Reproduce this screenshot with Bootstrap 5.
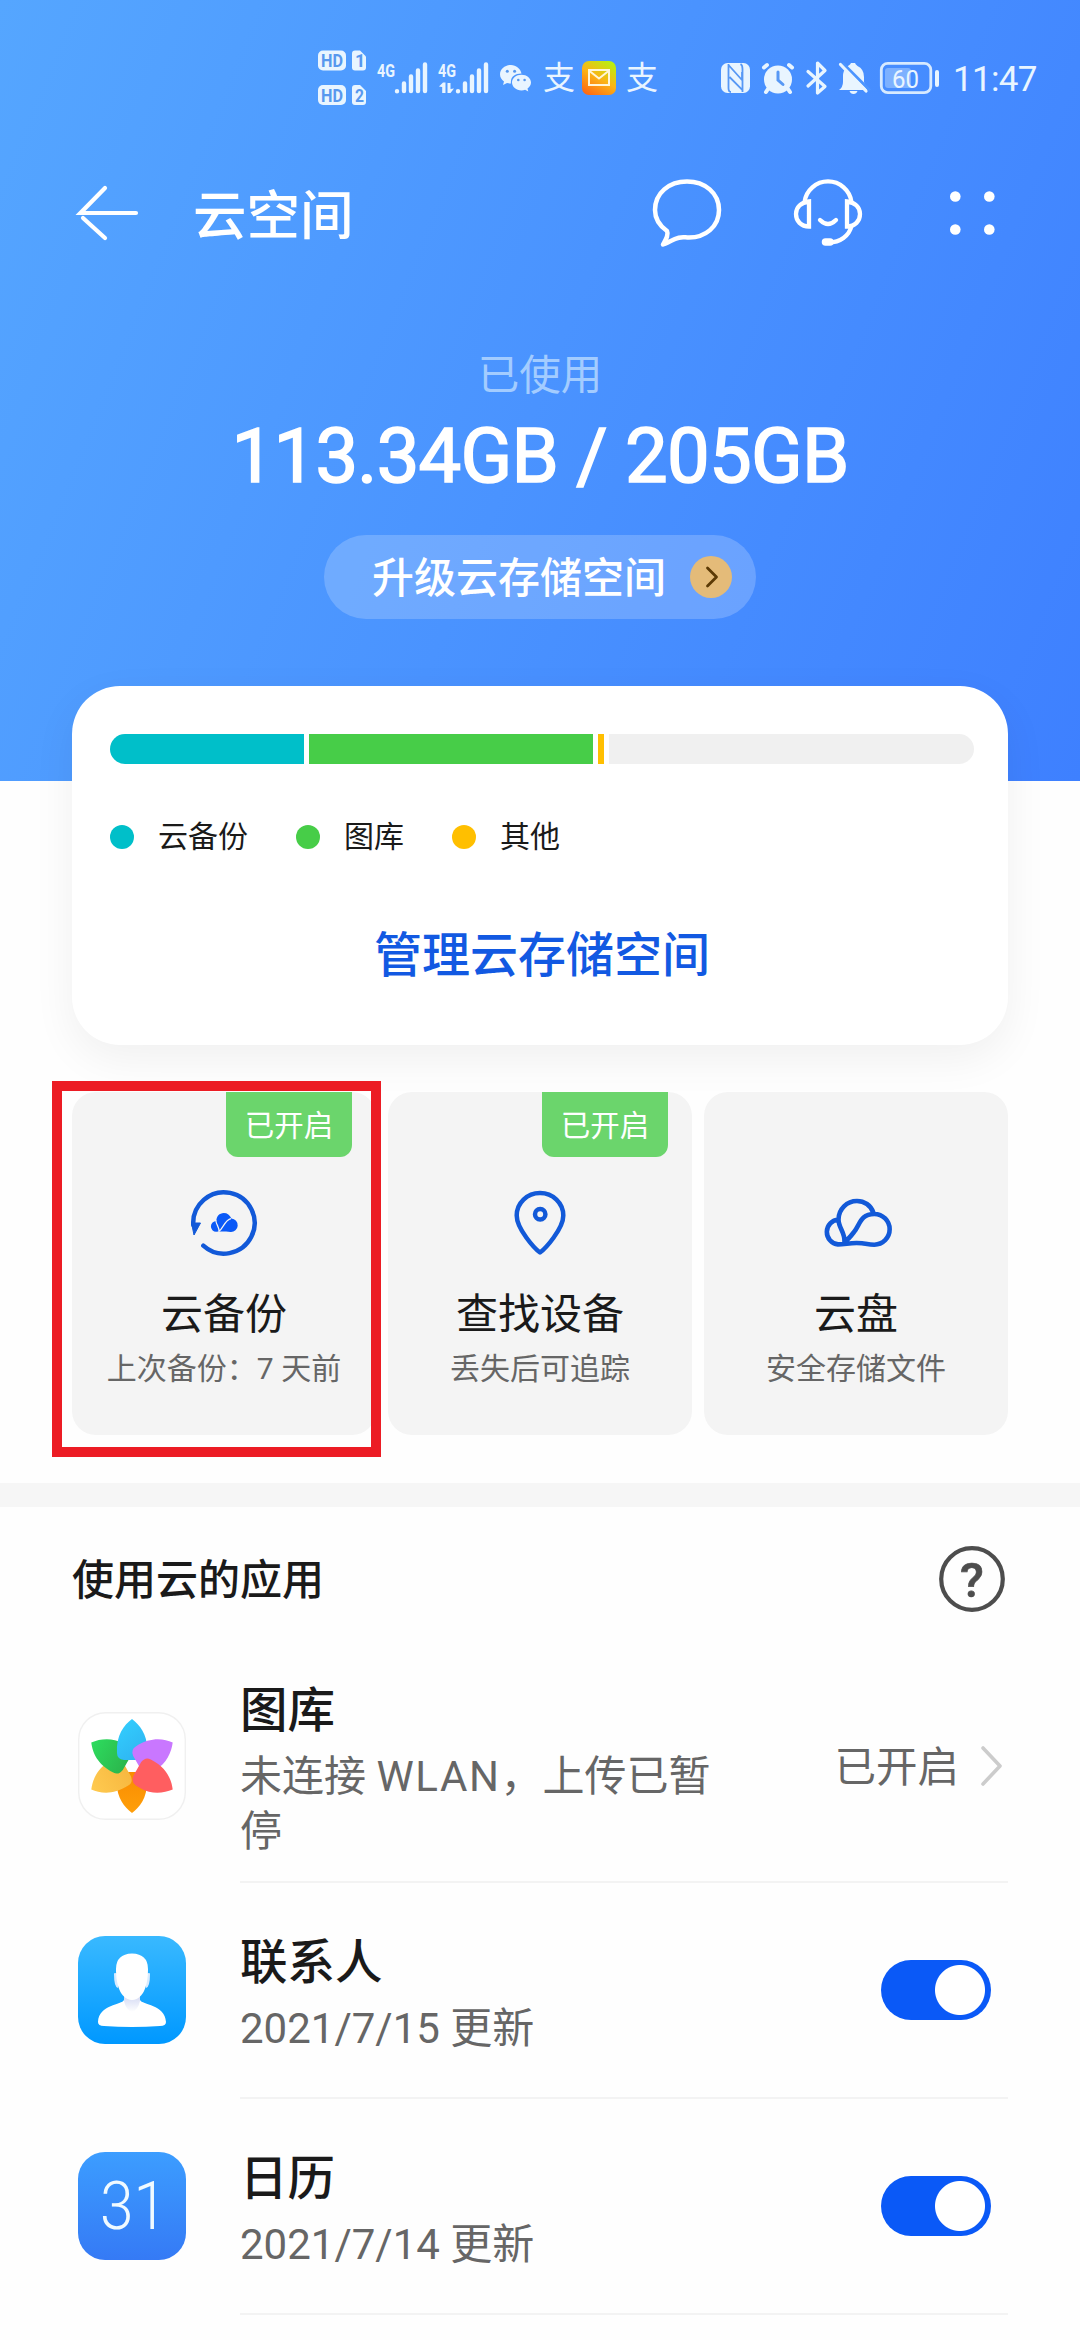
<!DOCTYPE html>
<html lang="zh-CN">
<head>
<meta charset="utf-8">
<meta name="viewport" content="width=device-width, initial-scale=1">
<title>云空间</title>
<link href="https://cdn.jsdelivr.net/npm/bootstrap@5.3.0/dist/css/bootstrap.min.css" rel="stylesheet">
<style>
  body { font-family: Roboto, "Noto Sans CJK SC", sans-serif; color: #1a1a1a; background: #fefefe; width: 1080px; height: 2340px; overflow: hidden; }
  svg { display: block; flex: none; overflow: visible; }
  .hero { height: 781px; background: linear-gradient(112deg, #55a6ff 0%, #4a93ff 50%, #3e80ff 100%); }
  .status { height: 156px; padding-left: 318px; color: #e9f5ff; }
  .gap-s { margin-left: 12px; }
  .gap-status { margin-left: 62px; }
  .clock { font-size: 35px; line-height: 40px; margin-left: 14px; padding-top: 3px; letter-spacing: -.7px; }
  .alipay { font-size: 32px; line-height: 36px; width: 33px; }
  .topnav { height: 114px; padding: 0 85px 0 77px; }
  .page-title { font-size: 53.5px; line-height: 60px; margin-left: 52px; padding-top: 7px; font-weight: 500; }
  .used-label { margin-top: 76px; font-size: 41.5px; line-height: 60px; color: #a3ccff; }
  .used-value { margin-top: 5px; font-size: 76px; line-height: 90px; -webkit-text-stroke: 1.6px #fff; letter-spacing: -.75px; }
  .upgrade { margin-top: 34px; width: 432px; height: 84px; padding: 0 24px 0 48px; background: rgba(255,255,255,.2); font-size: 42px; line-height: 84px; font-weight: 500; }
  .upgrade span { padding-top: 4px; }
  .storage { margin: -95px 72px 0; height: 359px; border-radius: 48px; padding: 48px 34px 0 38px; background: #fff; box-shadow: 0 14px 44px rgba(0,0,0,.06); }
  .meter { height: 30px; gap: 5px; border-radius: 15px; }
  .legend { margin-top: 55px; gap: 48px; font-size: 30px; line-height: 36px; }
  .legend-dot { width: 24px; height: 24px; border-radius: 50%; margin-right: 24px; }
  .manage { margin-top: 69px; font-size: 48px; line-height: 64px; font-weight: 500; color: #1259e2; }
  .teal { background: #00bfc9; } .green { background: #47cd48; } .amber { background: #ffbf00; }
  .tiles { margin: 47px 72px 0; gap: 12px; }
  .tile { width: 304px; height: 343px; border-radius: 24px; background: #f4f4f4; padding-top: 93px; position: relative; }
  .tile-name { margin-top: 24px; font-size: 42px; line-height: 60px; }
  .tile-note { font-size: 30px; line-height: 44px; color: #666; margin-top: 2px; white-space: nowrap; }
  .on-flag { position: absolute; top: 0; right: 24px; width: 126px; height: 65px; border-radius: 0 0 12px 12px; background: #6bd56c; color: #fff; font-size: 29.5px; line-height: 68px; text-align: center; }
  .marker { position: absolute; left: -20px; top: -11px; width: 329px; height: 376px; border: 10px solid #ec1c24; z-index: 2; }
  .band { margin-top: 48px; height: 24px; background: #f6f6f6; }
  .section-head { height: 144px; padding: 0 75px 0 72px; font-size: 42px; font-weight: 500; }
  .section-head span { padding-top: 3px; }
  .app-row { height: 216px; padding-left: 78px; }
  .app-row.tall { height: 232px; }
  .app-body { margin-left: 54px; width: 768px; border-bottom: 2px solid #f3f3f3; }
  .app-name { font-size: 47.5px; line-height: 58px; font-weight: 500; }
  .app-sub { font-size: 42px; line-height: 55px; color: #666; margin-top: 9px; }
  .app-sub .net { letter-spacing: 1.6px; }
  .app-text { width: 485px; padding-top: 9px; }
  .state { font-size: 41.5px; color: #666; gap: 22px; padding-right: 6px; }
  .state span { padding-top: 5px; }
  .form-check-input.toggle { width: 110px; height: 60px; margin: 0 17px 0 0; border: 0; border-radius: 30px; background: #0a59f7; float: none; flex: none; background-image: radial-gradient(circle at 79px 30px, #fff 24.5px, transparent 25.5px) !important; background-position: 0 0 !important; background-size: 110px 60px; }
</style>
</head>
<body>
<header class="hero text-white">
  <div class="status d-flex align-items-center">
    <svg width="48" height="56" viewBox="0 0 48 56" fill="#e9f5ff" font-family="Roboto, sans-serif" font-weight="700">
      <g><rect y=".5" width="28" height="20" rx="5"/><path d="M34 3.500q0-3 3-3h5l6 6v11q0 3-3 3h-8q-3 0-3-3z"/></g>
      <g transform="translate(0 35)"><rect width="28" height="20" rx="5"/><path d="M34 3q0-3 3-3h5l6 6v11q0 3-3 3h-8q-3 0-3-3z"/></g>
      <g fill="#5798ee" font-size="18"><text x="3" y="17" textLength="22" lengthAdjust="spacingAndGlyphs">HD</text><text x="37" y="17" textLength="8">1</text><text x="3" y="51.500" textLength="22" lengthAdjust="spacingAndGlyphs">HD</text><text x="37" y="51.500" textLength="9" lengthAdjust="spacingAndGlyphs">2</text></g>
    </svg>
    <svg class="gap-s" width="49" height="32" viewBox="0 0 49 32" fill="#e9f5ff">
      <text x="-1" y="14.500" font-size="19" font-weight="700" font-family="Roboto, sans-serif" textLength="18" lengthAdjust="spacingAndGlyphs">4G</text>
      <path d="M19 29.100v.1M26 21.500v7.600M33 14.500v14.600M40 8.500v20.600M47 2.500v26.600" stroke="#e9f5ff" stroke-width="4.400" stroke-linecap="round"/>
    </svg>
    <svg class="gap-s" width="49" height="32" viewBox="0 0 49 32" fill="#e9f5ff">
      <text x="-1" y="14.500" font-size="19" font-weight="700" font-family="Roboto, sans-serif" textLength="18" lengthAdjust="spacingAndGlyphs">4G</text>
      <path d="M0 24.500L4 20.500H6.500V31H3.200V25zM8.500 21H11.500V27L15 26.500L11.500 31H8.500z"/>
      <path d="M19 29.100v.1M26 21.500v7.600M33 14.500v14.600M40 8.500v20.600M47 2.500v26.600" stroke="#e9f5ff" stroke-width="4.400" stroke-linecap="round"/>
    </svg>
    <svg class="gap-s" width="31" height="27" viewBox="0 0 31 27" fill="#e9f5ff">
      <path d="M11 0C5 0 0 4 0 9.300c0 3 1.500 5.400 4 7.200L3 20l4-2c1.500.4 3 .6 4 .5C10 12 15 8.500 21.500 8.600 20.500 3.500 16 0 11 0z"/>
      <path d="M21.500 9.800c-5.400 0-9.500 3.400-9.500 7.800s4.200 7.800 9.500 7.800c1.300 0 2.600-.2 3.600-.6l3.200 1.800-.8-3c2.200-1.500 3.500-3.600 3.500-6 0-4.400-4.300-7.800-9.500-7.800z"/>
      <g fill="#5798ee"><circle cx="7.300" cy="6.300" r="1.500"/><circle cx="14.600" cy="6.300" r="1.500"/><circle cx="18.300" cy="15" r="1.300"/><circle cx="24.600" cy="15" r="1.300"/></g>
    </svg>
    <span class="alipay gap-s">支</span>
    <svg style="margin-left:6px" width="34" height="34" viewBox="0 0 34 34">
      <defs><linearGradient id="ml" x1=".2" y1="1" x2=".8" y2="0"><stop offset="0" stop-color="#ff6a13"/><stop offset=".5" stop-color="#fbb416"/><stop offset="1" stop-color="#b8f010"/></linearGradient></defs>
      <rect width="34" height="34" rx="7" fill="url(#ml)"/><g fill="none" stroke="#fff6d8" stroke-width="2"><rect x="7" y="9" width="20" height="15"/><path d="M7.500 10L17 17.500 26.500 10"/></g>
    </svg>
    <span class="alipay" style="margin-left:10px">支</span>
    <svg class="gap-status" width="29" height="30" viewBox="0 0 29 30"><rect width="29" height="30" rx="6.500" fill="#e9f5ff"/><path d="M7.500 1V25Q7.500 29 10 29M7.500 2L21 17V9M21.500 29V27L8.500 14M19.500 1Q21.500 2 21.500 6V28" fill="none" stroke="#5798f5" stroke-width="1.800"/></svg>
    <svg class="gap-s" width="32" height="31" viewBox="0 0 32 31" stroke="#e9f5ff" stroke-width="4" stroke-linecap="round"><circle cx="16" cy="16.500" r="14" fill="#e9f5ff" stroke="none"/><path d="M2 4.500L5 2M30 4.500L27 2M6 26L4 29M26 26L28 29" fill="none"/><path d="M16 9V17L21 21.500" fill="none" stroke="#5798f5" stroke-width="3"/></svg>
    <svg class="gap-s" width="21" height="34" viewBox="0 0 21 34" fill="none" stroke="#e9f5ff" stroke-width="3.200" stroke-linecap="round" stroke-linejoin="round"><path d="M2 10.500L19 25.500 11.500 32V2L19 9.500 2 25"/></svg>
    <svg class="gap-s" width="29" height="31" viewBox="0 0 29 31"><path d="M9 3q2.500-1.500 3-3h4q.5 1.500 2.500 3Q25 6 25 14V19L27 24.500 28 27H0q4-3 4-8V13q0-5 3-8zM10.500 28h8q-1 3-4 3t-4-3z" fill="#e9f5ff"/><path d="M3.500 0L31 27.500" stroke="#4c95ff" stroke-width="3"/><path d="M1.500 1.500L27 28" stroke="#e9f5ff" stroke-width="3.200" stroke-linecap="round"/></svg>
    <svg class="gap-s" width="59" height="32" viewBox="0 0 59 32"><rect x="5" y="6" width="26" height="20" rx="3" fill="#7db1ff"/><rect x="1.300" y="1.300" width="49.500" height="29.400" rx="6.500" fill="none" stroke="#d7eaff" stroke-width="2.800"/><rect x="55" y="8" width="4" height="17" rx="2" fill="#e9f5ff"/><text x="12" y="25.500" font-size="26.500" textLength="27" lengthAdjust="spacingAndGlyphs" fill="#e9f5ff" font-family="Roboto, sans-serif">60</text></svg>
    <span class="clock">11:47</span>
  </div>

  <nav class="topnav d-flex align-items-center">
    <svg width="64" height="58" viewBox="0 0 64 58" fill="none" stroke="#fff" stroke-width="4.200" stroke-linecap="round"><path d="M59 29H3.500L28 4M6 34L28 54"/></svg>
    <span class="page-title">云空间</span>
    <div class="d-flex align-items-center ms-auto">
      <svg width="68" height="68" viewBox="0 0 68 68" fill="none" stroke="#fff" stroke-width="4.500" stroke-linejoin="round"><path d="M34 2.500C52 2.500 66 14 66 31S52 58.500 36 58.500C31 58.500 28 57 22 60 18 62 14 64 10 65.500 12.500 61 16 56 14 52 7 47 2 41 2 31 2 14 16 2.500 34 2.500Z"/></svg>
      <svg style="margin-left:73px" width="68" height="66" viewBox="0 0 68 66" fill="none" stroke="#fff" stroke-width="4.300"><path d="M10.500 22A23.700 23.700 0 0 1 57.500 22M15 21.500V46.500C7 46.500 2 41 2 34S7 22.500 15 21.500ZM53 21.500V46.500C61 46.500 66 41 66 34S61 22.500 53 21.500ZM57.500 46C55 56 46 62.500 35 62.500"/><path d="M26 40Q34 48 42 40" stroke-linecap="round"/><path d="M31.500 62H36" stroke-width="7.500" stroke-linecap="round"/></svg>
      <svg style="margin-left:88px" width="45" height="44" viewBox="0 0 45 44" fill="#fff"><circle cx="5.300" cy="5.500" r="5.300"/><circle cx="39.300" cy="5.500" r="5.300"/><circle cx="5.300" cy="38.500" r="5.300"/><circle cx="39.300" cy="38.500" r="5.300"/></svg>
    </div>
  </nav>

  <div class="d-flex flex-column align-items-center">
    <div class="used-label">已使用</div>
    <div class="used-value">113.34GB / 205GB</div>
    <div class="upgrade rounded-pill d-flex align-items-center justify-content-between">
      <span>升级云存储空间</span>
      <svg width="42" height="42" viewBox="0 0 42 42"><circle cx="21" cy="21" r="21" fill="#e4bb79"/><path d="M17.500 12L26.500 21 17.500 30" fill="none" stroke="#5c3a05" stroke-width="2.800" stroke-linecap="round" stroke-linejoin="round"/></svg>
    </div>
  </div>
</header>

<main>
  <section class="storage position-relative">
    <div class="meter d-flex overflow-hidden">
      <div class="teal" style="width:194px"></div><div class="green" style="width:284px"></div><div class="amber" style="width:6px"></div><div class="flex-fill" style="background:#f0f0f0"></div>
    </div>
    <div class="legend d-flex">
      <div class="d-flex align-items-center"><span class="legend-dot teal"></span>云备份</div>
      <div class="d-flex align-items-center"><span class="legend-dot green"></span>图库</div>
      <div class="d-flex align-items-center"><span class="legend-dot amber"></span>其他</div>
    </div>
    <div class="manage text-center">管理云存储空间</div>
  </section>

  <section class="tiles d-flex">
    <div class="tile d-flex flex-column align-items-center">
      <span class="on-flag">已开启</span>
      <svg width="76" height="76" viewBox="-38 -38 76 76"><path d="M-20.700 22.700A30.700 30.700 0 1 0 -30.700 2" fill="none" stroke="#1259d8" stroke-width="4.500" stroke-linecap="round"/><path d="M-32.500 0H-23.500L-30 12Z" fill="#1259d8" stroke="#1259d8" stroke-linejoin="round"/>
        <g transform="translate(-15.800 -15.200) scale(.4)"><path d="M20.500 33A13.500 13.500 0 0 0 20 60C28 59 40 58.500 56 60.500A16.500 16.500 0 0 0 58 27C54 18 48 13 39 13 28 13 20 22 20.500 33Z" fill="#0a59f7"/><path d="M19 31C20 43 28 48 27 59C38 50 42 30 57 27" fill="none" stroke="#f4f4f4" stroke-width="3"/></g></svg>
      <div class="tile-name">云备份</div>
      <div class="tile-note">上次备份：7 天前</div>
      <div class="marker"></div>
    </div>
    <div class="tile d-flex flex-column align-items-center">
      <span class="on-flag">已开启</span>
      <svg width="76" height="76" viewBox="0 0 76 76" fill="none" stroke="#1259d8" stroke-width="4.500" stroke-linejoin="round"><path d="M38 67.500C33 64 14.700 44 14.700 30.500a23.300 22.500 0 0 1 46.600 0C61.300 44 43 64 38 67.500Z"/><circle cx="38.200" cy="29.300" r="5.200"/></svg>
      <div class="tile-name">查找设备</div>
      <div class="tile-note">丢失后可追踪</div>
    </div>
    <div class="tile d-flex flex-column align-items-center">
      <svg width="76" height="76" viewBox="0 0 76 76" fill="none" stroke="#1259d8" stroke-width="4.600" stroke-linejoin="round"><path d="M20.500 34.500A12.500 12.500 0 0 0 20 59.400C28 59.400 34 57 44 58.300 49 59 52 59.700 56.300 59.700A15.350 15.350 0 0 0 56.300 29C42 29 42 40 36 47 33 51 30 54.500 26.500 57 27 47 20.500 43 20.500 34.500 20.500 24 29 16 39 16 46 16 53 20 55.500 28"/></svg>
      <div class="tile-name">云盘</div>
      <div class="tile-note">安全存储文件</div>
    </div>
  </section>

  <div class="band"></div>

  <section>
    <div class="section-head d-flex align-items-center justify-content-between">
      <span>使用云的应用</span>
      <svg width="66" height="66" viewBox="0 0 66 66"><circle cx="33" cy="33" r="30.800" fill="none" stroke="#4d4d4d" stroke-width="4.200"/><text x="33" y="50.500" text-anchor="middle" font-size="49" font-family="Roboto, sans-serif" fill="#4d4d4d" stroke="#4d4d4d" stroke-width=".6">?</text></svg>
    </div>

    <div class="app-row tall d-flex align-items-stretch">
      <svg class="align-self-center" style="margin-top:-2px" width="108" height="108" viewBox="0 0 108 108">
        <defs>
          <path id="petal" d="M0-47C8-41 15-31 15-19L15-13Q14-6 6-6L-8-6Q-15-7-15-13C-16-31-8-41 0-47Z"/>
          <linearGradient id="p1" x1="0" y1="0" x2=".6" y2="1"><stop offset="0" stop-color="#33d0ff"/><stop offset="1" stop-color="#2fb6f2"/></linearGradient>
          <linearGradient id="p2" x1="0" y1="0" x2="0" y2="1"><stop offset="0" stop-color="#2ddc5e"/><stop offset="1" stop-color="#2cb74d"/></linearGradient>
          <linearGradient id="p3" x1="0" y1="0" x2="0" y2="1"><stop offset="0" stop-color="#ff9f0a"/><stop offset="1" stop-color="#f98c00"/></linearGradient>
          <linearGradient id="p4" x1="0" y1="0" x2="0" y2="1"><stop offset="0" stop-color="#ffca50"/><stop offset="1" stop-color="#f7b840"/></linearGradient>
        </defs>
        <rect x=".7" y=".7" width="106.600" height="106.600" rx="27" fill="#fff" stroke="#f0f0f0" stroke-width="1.400"/>
        <g transform="translate(54 54)"><use href="#petal" fill="url(#p3)" transform="rotate(180)"/><use href="#petal" fill="url(#p4)" transform="rotate(240)"/><use href="#petal" fill="url(#p2)" transform="rotate(300)"/><use href="#petal" fill="url(#p1)"/><use href="#petal" fill="#c977ff" transform="rotate(60)"/><use href="#petal" fill="#ff5e60" transform="rotate(120)"/><circle r="5.500" fill="#fff"/></g>
      </svg>
      <div class="app-body d-flex align-items-center justify-content-between">
        <div class="app-text"><div class="app-name">图库</div><div class="app-sub">未连接 <span class="net">WLAN</span>，上传已暂停</div></div>
        <div class="state d-flex align-items-center"><span>已开启</span><svg width="21" height="40" viewBox="0 0 21 40" fill="none" stroke="#ccc" stroke-width="3.600" stroke-linecap="round" stroke-linejoin="round"><path d="M2 2L19 20 2 38"/></svg></div>
      </div>
    </div>

    <div class="app-row d-flex align-items-stretch">
      <svg class="align-self-center" style="margin-top:-2px" width="108" height="108" viewBox="0 0 108 108">
        <defs><linearGradient id="ct" x1="0" y1="0" x2="0" y2="1"><stop offset="0" stop-color="#39b9ff"/><stop offset="1" stop-color="#0098ff"/></linearGradient><linearGradient id="nk" x1="0" y1="0" x2="0" y2="1"><stop offset="0" stop-color="#cfd5f2"/><stop offset="1" stop-color="#fff"/></linearGradient></defs>
        <rect width="108" height="108" rx="27" fill="url(#ct)"/>
        <path d="M46 58V64C44 69 21 68 20 86Q20 90 26 90 54 92 82 90 88 90 88 86C87 68 64 69 62 64V58Z" fill="#fff"/>
        <path d="M46 58H62V65Q60 74 54 76 48 74 46 65Z" fill="url(#nk)"/>
        <path d="M36 38Q36 36 40 38V52Q36 51 36 38ZM72 38Q72 36 68 38V52Q72 51 72 38Z" fill="#d9ebff"/>
        <path d="M54 17.500Q70 18 70 33C70 46 67 63 54 64 41 63 38 46 38 33Q38 18 54 17.500Z" fill="#fff"/>
      </svg>
      <div class="app-body d-flex align-items-center justify-content-between">
        <div class="app-text"><div class="app-name">联系人</div><div class="app-sub">2021/7/15 更新</div></div>
        <input class="form-check-input toggle" type="checkbox" role="switch" checked aria-label="联系人">
      </div>
    </div>

    <div class="app-row d-flex align-items-stretch">
      <svg class="align-self-center" style="margin-top:-2px" width="108" height="108" viewBox="0 0 108 108">
        <defs><linearGradient id="cl" x1="0" y1="0" x2="0" y2="1"><stop offset="0" stop-color="#3c9dff"/><stop offset="1" stop-color="#357af5"/></linearGradient></defs>
        <rect width="108" height="108" rx="27" fill="url(#cl)"/><text x="22" y="77" font-size="67" font-weight="300" font-family="Roboto, sans-serif" fill="#f0faff" textLength="67" lengthAdjust="spacingAndGlyphs">31</text>
      </svg>
      <div class="app-body d-flex align-items-center justify-content-between">
        <div class="app-text"><div class="app-name">日历</div><div class="app-sub">2021/7/14 更新</div></div>
        <input class="form-check-input toggle" type="checkbox" role="switch" checked aria-label="日历">
      </div>
    </div>
  </section>
</main>
<script src="https://cdn.jsdelivr.net/npm/bootstrap@5.3.0/dist/js/bootstrap.bundle.min.js"></script>
</body>
</html>
